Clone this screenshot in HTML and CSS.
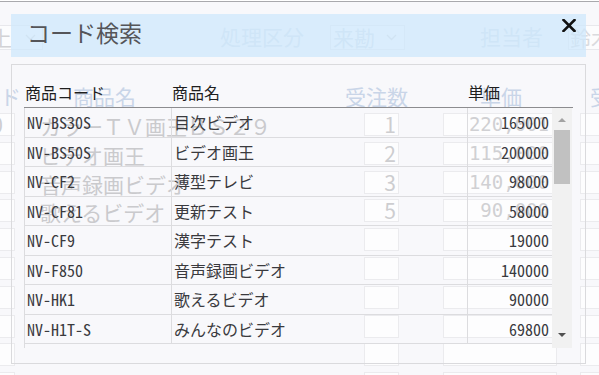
FILE: index.html
```html
<!DOCTYPE html>
<html lang="ja">
<head>
<meta charset="utf-8">
<title>コード検索</title>
<link rel="stylesheet" href="styles.css">
</head>
<body>
<div class="page">
  <div class="bg">
    <div class="bg-top">
      <div class="sel sel-a"><span>上</span><svg class="chev" width="11" height="7" viewBox="0 0 11 7"><path d="M1 1 L5.5 5.5 L10 1" fill="none" stroke="#d6d6da" stroke-width="1.3"/></svg></div>
      <span class="lbl lbl-kubun">処理区分</span>
      <div class="sel sel-b"><span>来勘</span><svg class="chev" width="11" height="7" viewBox="0 0 11 7"><path d="M1 1 L5.5 5.5 L10 1" fill="none" stroke="#d6d6da" stroke-width="1.3"/></svg></div>
      <span class="lbl lbl-tanto">担当者</span>
      <div class="inp inp-tanto">鈴木</div>
    </div>
    <div class="bg-head">
      <span class="h-code">ード</span>
      <span class="h-name">商品名</span>
      <span class="h-qty">受注数</span>
      <span class="h-price">単価</span>
      <span class="h-next">受</span>
    </div>
    <div class="bg-rows">
      <div class="bg-row"><div class="box b-left">10</div><div class="b-name">カラーＴＶ画王ＢＳ２９</div><div class="box b-qty">1</div><div class="box b-price">220,001</div><div class="box b-right"></div></div>
      <div class="bg-row"><div class="box b-left"></div><div class="b-name">ビデオ画王</div><div class="box b-qty">2</div><div class="box b-price">115,000</div><div class="box b-right"></div></div>
      <div class="bg-row"><div class="box b-left"></div><div class="b-name">音声録画ビデオ</div><div class="box b-qty">3</div><div class="box b-price">140,000</div><div class="box b-right"></div></div>
      <div class="bg-row"><div class="box b-left"></div><div class="b-name">歌えるビデオ</div><div class="box b-qty">5</div><div class="box b-price">90,000</div><div class="box b-right"></div></div>
      <div class="bg-row"><div class="box b-left"></div><div class="b-name"></div><div class="box b-qty"></div><div class="box b-price"></div><div class="box b-right"></div></div>
      <div class="bg-row"><div class="box b-left"></div><div class="b-name"></div><div class="box b-qty"></div><div class="box b-price"></div><div class="box b-right"></div></div>
      <div class="bg-row"><div class="box b-left"></div><div class="b-name"></div><div class="box b-qty"></div><div class="box b-price"></div><div class="box b-right"></div></div>
      <div class="bg-row"><div class="box b-left"></div><div class="b-name"></div><div class="box b-qty"></div><div class="box b-price"></div><div class="box b-right"></div></div>
      <div class="bg-row"><div class="box b-left"></div><div class="b-name"></div><div class="box b-qty"></div><div class="box b-price"></div><div class="box b-right"></div></div>
      <div class="bg-row"><div class="box b-left"></div><div class="b-name"></div><div class="box b-qty"></div><div class="box b-price"></div><div class="box b-right"></div></div>
    </div>
  </div>
</div>

<div class="modal">
  <div class="m-head">
    <h1 class="m-title">コード検索</h1>
    <button class="m-close" type="button" aria-label="閉じる"><svg width="14" height="13" viewBox="0 0 14 13"><path d="M1.5 1 L12.5 12 M12.5 1 L1.5 12" stroke="#111" stroke-width="2.6" stroke-linecap="square"/></svg></button>
  </div>
  <div class="m-body">
    <div class="t-head">
      <div class="th th-code">商品コード</div>
      <div class="th th-name">商品名</div>
      <div class="th th-price">単価</div>
    </div>
    <div class="t-body">
      <div class="rows">
        <div class="row"><div class="c-code">NV-BS30S</div><div class="c-name">目次ビデオ</div><div class="c-price">165000</div></div>
        <div class="row"><div class="c-code">NV-BS50S</div><div class="c-name">ビデオ画王</div><div class="c-price">200000</div></div>
        <div class="row"><div class="c-code">NV-CF2</div><div class="c-name">薄型テレビ</div><div class="c-price">98000</div></div>
        <div class="row"><div class="c-code">NV-CF81</div><div class="c-name">更新テスト</div><div class="c-price">58000</div></div>
        <div class="row"><div class="c-code">NV-CF9</div><div class="c-name">漢字テスト</div><div class="c-price">19000</div></div>
        <div class="row"><div class="c-code">NV-F850</div><div class="c-name">音声録画ビデオ</div><div class="c-price">140000</div></div>
        <div class="row"><div class="c-code">NV-HK1</div><div class="c-name">歌えるビデオ</div><div class="c-price">90000</div></div>
        <div class="row"><div class="c-code">NV-H1T-S</div><div class="c-name">みんなのビデオ</div><div class="c-price">69800</div></div>
      </div>
      <div class="sb">
        <div class="sb-up"></div>
        <div class="sb-thumb"></div>
        <div class="sb-space"></div>
        <div class="sb-down"></div>
      </div>
    </div>
  </div>
</div>
</body>
</html>
```

FILE: styles.css
```css
* { box-sizing: border-box; margin: 0; padding: 0; }
html, body { width: 599px; height: 375px; overflow: hidden; }
body {
  position: relative;
  background: #f8f8fb;
  border-top: 1px solid #ffffff;
  font-family: "Noto Sans CJK JP", "Noto Sans", sans-serif;
}
.page {
  border-top: 1px solid #a9a9ad;
  height: 374px;
  overflow: hidden;
}

/* faded background form */
.bg { margin-left: -40px; width: 720px; padding-top: 23px; color: #cdcdd0; font-size: 21px; }
.bg-top { display: flex; align-items: flex-start; height: 25px; line-height: 23px; white-space: nowrap; }
.bg-top > * { flex: none; }
.sel, .inp {
  height: 25px;
  border: 1px solid #e8e8ec;
  background: #fcfcfd;
  display: flex;
  align-items: center;
}
.sel-a { width: 83px; padding-left: 30px; gap: 13px; color: #d2d2d5; }
.sel-b { width: 75px; padding-left: 2px; gap: 11px; color: #d3dde9; }
.chev { display: block; flex: none; }
.lbl { color: #d3dde9; }
.lbl-kubun { margin-left: 177px; width: 110px; }
.lbl-tanto { margin-left: 75px; width: 88px; }
.inp-tanto { width: 80px; padding-left: 1px; color: #dadadd; }

.bg-head {
  display: flex;
  margin-top: 33px;
  line-height: 26px;
  color: #c9d5e8;
  white-space: nowrap;
}
.bg-head > * { flex: none; }
.h-code { margin-left: 19px; width: 94px; }
.h-name { width: 272px; }
.h-qty { width: 135px; }
.h-price { width: 110px; }

.bg-rows { margin-top: 4px; }
.bg-row { display: flex; align-items: flex-start; height: 28.8px; }
.box {
  height: 23px;
  border: 1px solid #ebebee;
  background: #fdfdfe;
  flex: none;
  text-align: right;
  line-height: 21px;
  overflow: hidden;
  white-space: nowrap;
}
.b-left { margin-left: 10px; width: 45px; padding-right: 11px; }
.b-name { width: 349px; padding-left: 25px; line-height: 26px; white-space: nowrap; flex: none; color: #cacacd; }
.b-qty { width: 35px; padding-right: 2px; }
.b-price {
  margin-left: 44px;
  width: 114px;
  padding-right: 7px;
  font-family: "DejaVu Sans Mono", monospace;
  font-size: 19px;
  color: #d0d0d3;
}
.b-right { margin-left: 23px; width: 60px; }

/* modal */
.modal {
  position: absolute;
  left: 11px;
  top: 13px;
  width: 575px;
}
.m-head {
  height: 43px;
  background: rgba(205, 232, 252, 0.72);
  display: flex;
  justify-content: space-between;
  align-items: flex-start;
}
.m-title {
  font-weight: normal;
  font-size: 23px;
  line-height: 37px;
  color: #555559;
  padding-left: 16px;
}
.m-close {
  border: 0;
  background: none;
  margin-top: 5px;
  margin-right: 10px;
  width: 14px;
  height: 13px;
  display: block;
}
.m-close svg { display: block; }

.m-body {
  margin-top: 7px;
  height: 300px;
  border: 1px solid #dadadd;
  padding: 0 12px;
}
.t-head {
  display: grid;
  grid-template-columns: 147px 296px 106px;
  border-bottom: 1px solid #8c8c8f;
  color: #1e1e1e;
  font-size: 16px;
  line-height: 24px;
}
.th { padding: 15px 0 3px 1px; }

.t-body { display: flex; height: 240px; }
.rows { width: 528px; border-left: 1px solid #dcdcdf; }
.row {
  display: grid;
  grid-template-columns: 146px 296px 85px;
  height: 29.5px;
  border-bottom: 1px solid #dcdcdf;
  color: #3a3a3e;
  font-size: 16px;
}
.row > div { display: flex; align-items: center; white-space: nowrap; }
.c-code, .c-price { font-family: "Noto Sans Mono CJK JP", "DejaVu Sans Mono", monospace; }
.c-code { padding-left: 2px; }
.c-name { border-left: 1px solid #dcdcdf; padding-left: 2px; }
.c-price { border-left: 1px solid #dcdcdf; justify-content: flex-end; padding-right: 3px; }

.sb {
  width: 20px;
  background: #f1f1f1;
  display: flex;
  flex-direction: column;
  align-items: center;
}
.sb-up {
  margin-top: 10px;
  width: 0; height: 0;
  border-left: 4.5px solid transparent;
  border-right: 4.5px solid transparent;
  border-bottom: 4.5px solid #a3a3a3;
}
.sb-thumb {
  margin-top: 7.5px;
  width: 16px;
  height: 54px;
  background: #c1c1c1;
}
.sb-space { flex: 1; }
.sb-down {
  margin-bottom: 11px;
  width: 0; height: 0;
  border-left: 4.5px solid transparent;
  border-right: 4.5px solid transparent;
  border-top: 4.5px solid #505050;
}
```
